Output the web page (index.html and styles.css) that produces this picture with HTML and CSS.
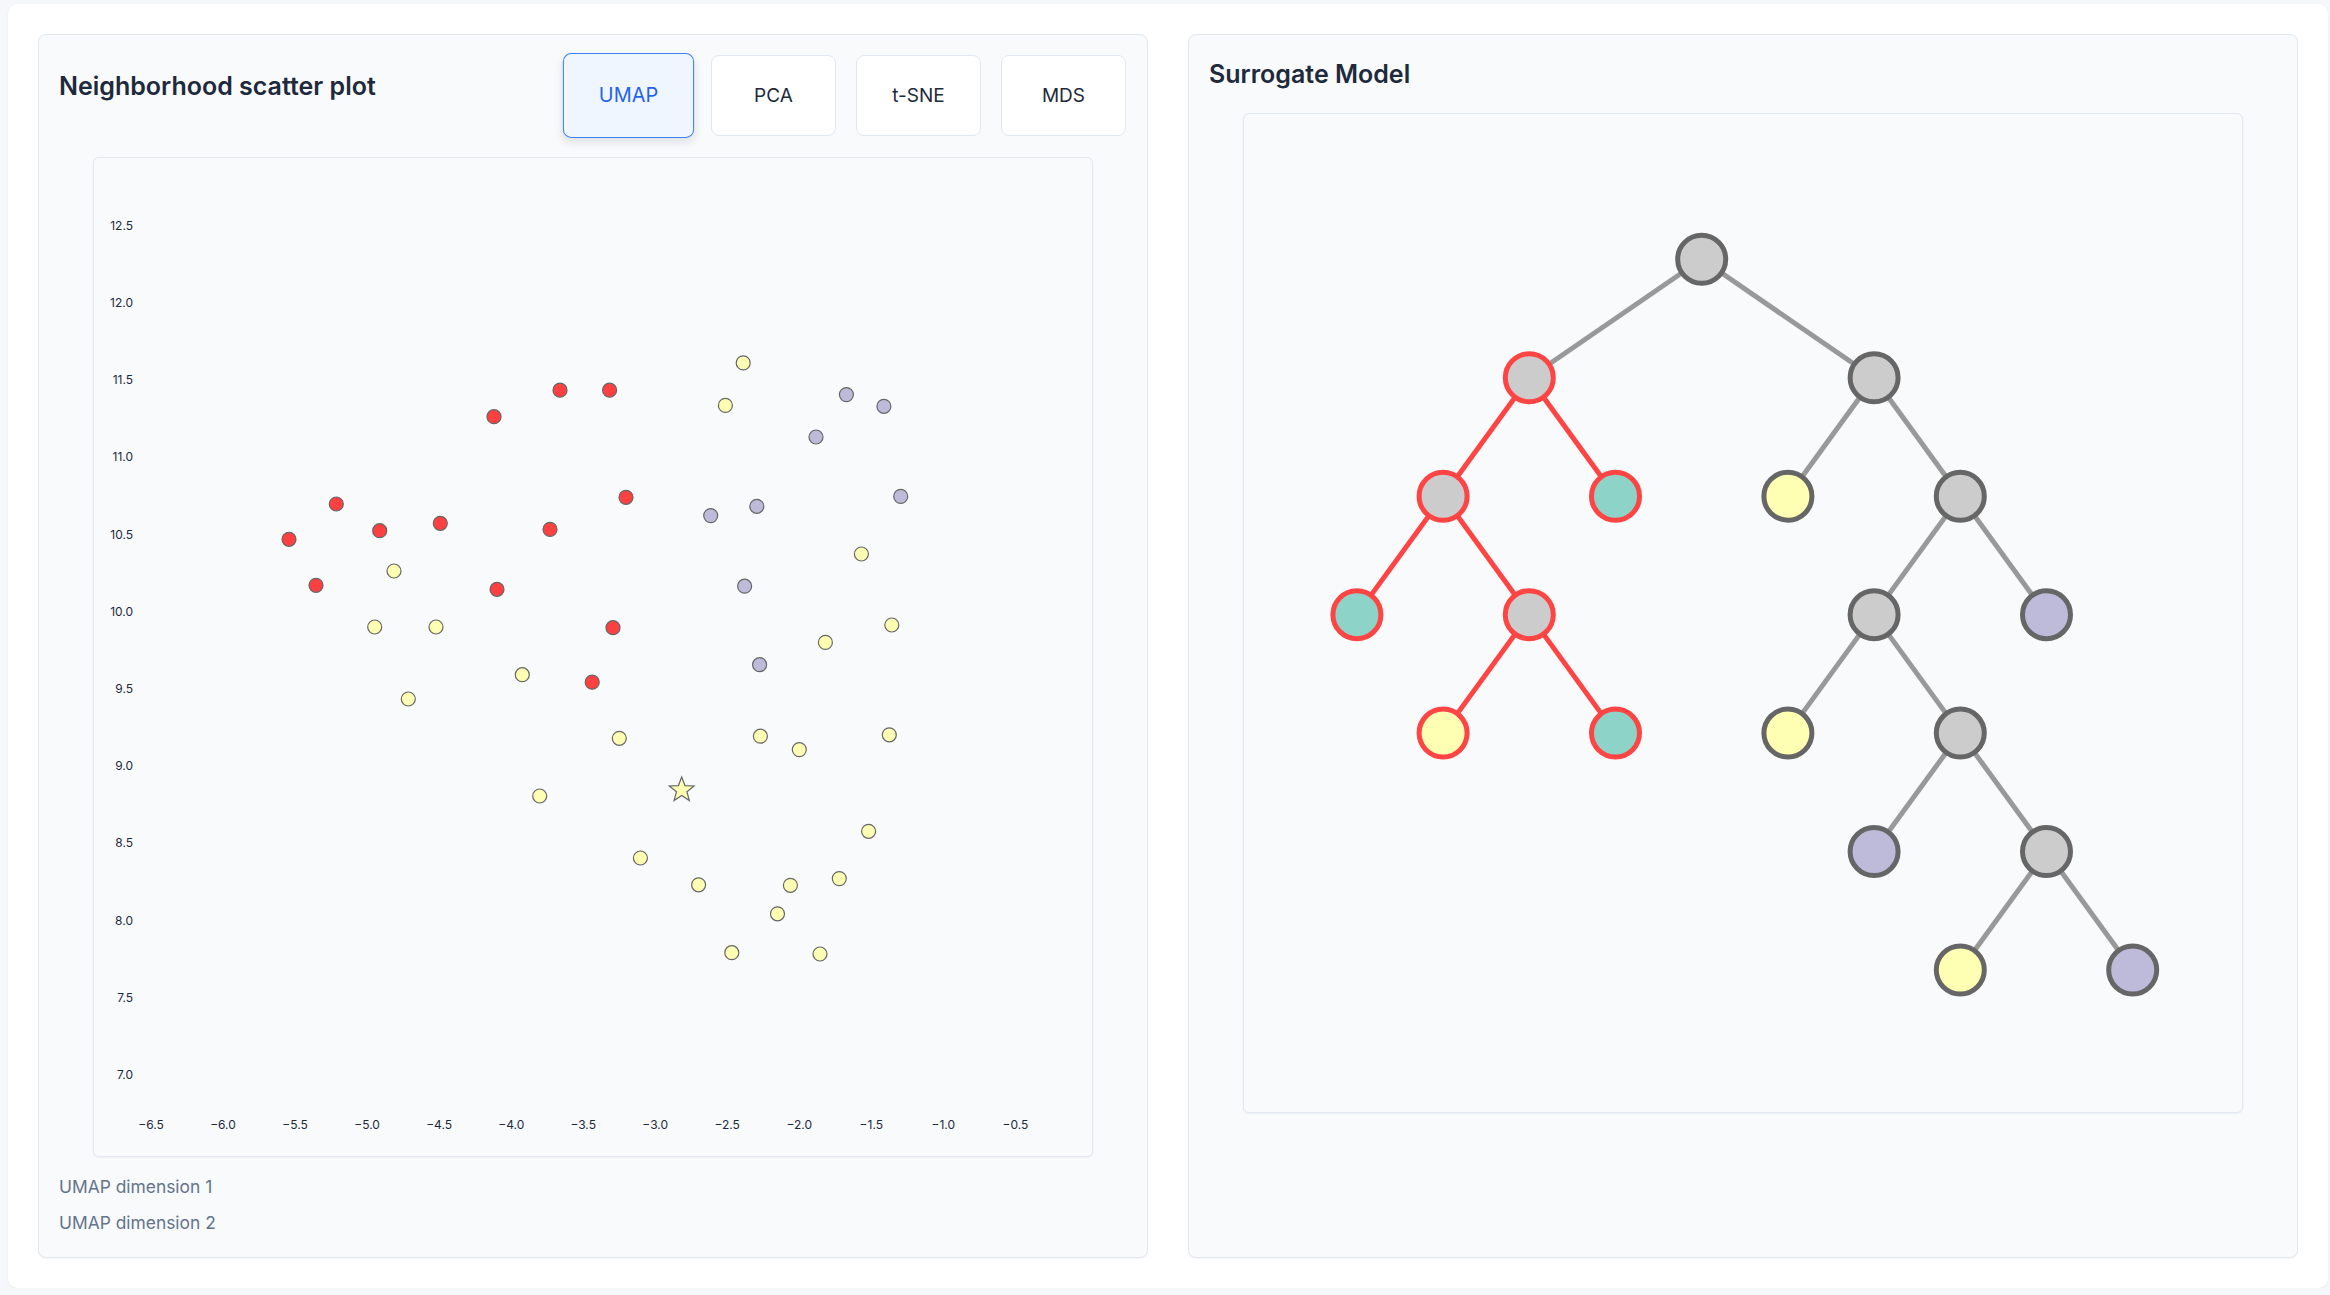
FILE: index.html
```html
<!DOCTYPE html>
<html lang="en">
<head>
<meta charset="utf-8">
<title>Neighborhood explorer</title>
<link rel="stylesheet" href="styles.css">
</head>
<body>
<div class="app">
  <section class="panel">
    <div class="panel-header">
      <h2 class="panel-title scatter-title">Neighborhood scatter plot</h2>
      <div class="method-tabs">
        <button class="tab active">UMAP</button>
        <button class="tab">PCA</button>
        <button class="tab">t-SNE</button>
        <button class="tab">MDS</button>
      </div>
    </div>
    <div class="chart-box">
      <svg class="chart" width="998" height="998" viewBox="0 0 998 998">
        <g transform="translate(-94,-158)">
          <g class="ticks-y">
            <text x="133" y="225.3">12.5</text>
            <text x="133" y="302.5">12.0</text>
            <text x="133" y="379.7">11.5</text>
            <text x="133" y="456.9">11.0</text>
            <text x="133" y="534.1">10.5</text>
            <text x="133" y="611.3">10.0</text>
            <text x="133" y="688.5">9.5</text>
            <text x="133" y="765.7">9.0</text>
            <text x="133" y="842.9">8.5</text>
            <text x="133" y="920.1">8.0</text>
            <text x="133" y="997.3">7.5</text>
            <text x="133" y="1074.5">7.0</text>
          </g>
          <g class="ticks-x">
            <text x="151" y="1124">−6.5</text>
            <text x="223" y="1124">−6.0</text>
            <text x="295.1" y="1124">−5.5</text>
            <text x="367.1" y="1124">−5.0</text>
            <text x="439.1" y="1124">−4.5</text>
            <text x="511.2" y="1124">−4.0</text>
            <text x="583.2" y="1124">−3.5</text>
            <text x="655.2" y="1124">−3.0</text>
            <text x="727.2" y="1124">−2.5</text>
            <text x="799.3" y="1124">−2.0</text>
            <text x="871.3" y="1124">−1.5</text>
            <text x="943.3" y="1124">−1.0</text>
            <text x="1015.4" y="1124">−0.5</text>
          </g>
          <g class="pt red">
            <circle cx="289" cy="539.3" r="7"/>
            <circle cx="336.3" cy="504" r="7"/>
            <circle cx="316" cy="585.3" r="7"/>
            <circle cx="379.7" cy="530.7" r="7"/>
            <circle cx="440.3" cy="523.3" r="7"/>
            <circle cx="494" cy="416.7" r="7"/>
            <circle cx="560" cy="390.2" r="7"/>
            <circle cx="609.6" cy="390.2" r="7"/>
            <circle cx="497" cy="589.3" r="7"/>
            <circle cx="550" cy="529.4" r="7"/>
            <circle cx="626" cy="497.3" r="7"/>
            <circle cx="613" cy="627.7" r="7"/>
            <circle cx="592.2" cy="682.2" r="7"/>
          </g>
          <g class="pt yellow">
            <circle cx="394" cy="571" r="7"/>
            <circle cx="374.7" cy="627" r="7"/>
            <circle cx="436" cy="627" r="7"/>
            <circle cx="408.3" cy="699" r="7"/>
            <circle cx="522.3" cy="674.7" r="7"/>
            <circle cx="539.7" cy="796" r="7"/>
            <circle cx="619.3" cy="738.3" r="7"/>
            <circle cx="640.4" cy="858" r="7"/>
            <circle cx="698.6" cy="884.8" r="7"/>
            <circle cx="731.8" cy="952.7" r="7"/>
            <circle cx="743.2" cy="362.9" r="7"/>
            <circle cx="725.4" cy="405.4" r="7"/>
            <circle cx="760.4" cy="736.2" r="7"/>
            <circle cx="799.3" cy="749.6" r="7"/>
            <circle cx="777.5" cy="913.8" r="7"/>
            <circle cx="790.4" cy="885.3" r="7"/>
            <circle cx="820" cy="954" r="7"/>
            <circle cx="839.3" cy="878.6" r="7"/>
            <circle cx="868.6" cy="831.3" r="7"/>
            <circle cx="889.3" cy="734.8" r="7"/>
            <circle cx="891.8" cy="625" r="7"/>
            <circle cx="861.4" cy="554" r="7"/>
            <circle cx="825.4" cy="642.4" r="7"/>
          </g>
          <g class="pt purple">
            <circle cx="846.4" cy="394.6" r="7"/>
            <circle cx="883.9" cy="406.3" r="7"/>
            <circle cx="816" cy="437" r="7"/>
            <circle cx="710.7" cy="515.6" r="7"/>
            <circle cx="756.8" cy="506.3" r="7"/>
            <circle cx="900.7" cy="496.4" r="7"/>
            <circle cx="744.6" cy="586.2" r="7"/>
            <circle cx="759.6" cy="664.7" r="7"/>
          </g>
          <polygon class="pt yellow star" transform="translate(681.7,790)" points="0,-13 3.23,-4.45 12.36,-4.02 5.23,1.7 7.64,10.52 0,5.5 -7.64,10.52 -5.23,1.7 -12.36,-4.02 -3.23,-4.45"/>
        </g>
      </svg>
    </div>
    <div class="axis-caption first">UMAP dimension 1</div>
    <div class="axis-caption">UMAP dimension 2</div>
  </section>

  <section class="panel">
    <h2 class="panel-title tree-title">Surrogate Model</h2>
    <div class="chart-box">
      <svg class="chart" width="998" height="998" viewBox="0 0 998 998">
        <g transform="translate(-1244,-114)">
          <g class="edge">
            <line x1="1701.7" y1="259.3" x2="1529.3" y2="377.75"/>
            <line x1="1701.7" y1="259.3" x2="1874.1" y2="377.75"/>
            <line x1="1874.1" y1="377.75" x2="1787.9" y2="496.2"/>
            <line x1="1874.1" y1="377.75" x2="1960.3" y2="496.2"/>
            <line x1="1960.3" y1="496.2" x2="1874.1" y2="614.65"/>
            <line x1="1960.3" y1="496.2" x2="2046.5" y2="614.65"/>
            <line x1="1874.1" y1="614.65" x2="1787.9" y2="733.1"/>
            <line x1="1874.1" y1="614.65" x2="1960.3" y2="733.1"/>
            <line x1="1960.3" y1="733.1" x2="1874.1" y2="851.55"/>
            <line x1="1960.3" y1="733.1" x2="2046.5" y2="851.55"/>
            <line x1="2046.5" y1="851.55" x2="1960.3" y2="970"/>
            <line x1="2046.5" y1="851.55" x2="2132.7" y2="970"/>
          </g>
          <g class="edge path">
            <line x1="1529.3" y1="377.75" x2="1443.1" y2="496.2"/>
            <line x1="1529.3" y1="377.75" x2="1615.5" y2="496.2"/>
            <line x1="1443.1" y1="496.2" x2="1356.9" y2="614.65"/>
            <line x1="1443.1" y1="496.2" x2="1529.3" y2="614.65"/>
            <line x1="1529.3" y1="614.65" x2="1443.1" y2="733.1"/>
            <line x1="1529.3" y1="614.65" x2="1615.5" y2="733.1"/>
          </g>
          <g class="node">
            <circle class="split" cx="1701.7" cy="259.3" r="24"/>
            <circle class="split on-path" cx="1529.3" cy="377.75" r="24"/>
            <circle class="split" cx="1874.1" cy="377.75" r="24"/>
            <circle class="split on-path" cx="1443.1" cy="496.2" r="24"/>
            <circle class="leaf-teal on-path" cx="1615.5" cy="496.2" r="24"/>
            <circle class="leaf-yellow" cx="1787.9" cy="496.2" r="24"/>
            <circle class="split" cx="1960.3" cy="496.2" r="24"/>
            <circle class="leaf-teal on-path" cx="1356.9" cy="614.65" r="24"/>
            <circle class="split on-path" cx="1529.3" cy="614.65" r="24"/>
            <circle class="split" cx="1874.1" cy="614.65" r="24"/>
            <circle class="leaf-purple" cx="2046.5" cy="614.65" r="24"/>
            <circle class="leaf-yellow on-path" cx="1443.1" cy="733.1" r="24"/>
            <circle class="leaf-teal on-path" cx="1615.5" cy="733.1" r="24"/>
            <circle class="leaf-yellow" cx="1787.9" cy="733.1" r="24"/>
            <circle class="split" cx="1960.3" cy="733.1" r="24"/>
            <circle class="leaf-purple" cx="1874.1" cy="851.55" r="24"/>
            <circle class="split" cx="2046.5" cy="851.55" r="24"/>
            <circle class="leaf-yellow" cx="1960.3" cy="970" r="24"/>
            <circle class="leaf-purple" cx="2132.7" cy="970" r="24"/>
          </g>
        </g>
      </svg>
    </div>
  </section>
</div>
</body>
</html>
```

FILE: styles.css
```css
* { box-sizing: border-box; }

html, body {
  margin: 0;
  padding: 0;
  background: #f5f7fa;
  font-family: Inter, "Noto Sans", sans-serif;
  color: #1e293b;
}

.app {
  margin: 4px 2px 0 8px;
  height: 1284px;
  padding: 30px;
  background: #ffffff;
  border-radius: 10px;
  box-shadow: 0 1px 3px rgba(15, 23, 42, 0.05);
  display: grid;
  grid-template-columns: 1fr 1fr;
  gap: 40px;
}

.panel {
  background: #f8fafc;
  border: 1px solid #e2e8f0;
  border-radius: 8px;
  padding: 20px;
  display: flex;
  flex-direction: column;
  box-shadow: 0 1px 2px rgba(15, 23, 42, 0.04);
}

.panel-header {
  display: flex;
  justify-content: space-between;
  align-items: flex-start;
  height: 81px;
}

.panel-title {
  margin: 0;
  font-size: 25px;
  line-height: 32px;
  font-weight: 600;
  color: #1e293b;
}

.scatter-title { margin-top: 15px; }
.tree-title { margin-top: 3px; }

.method-tabs {
  display: flex;
  gap: 20px;
  margin-right: 1px;
}

.tab {
  width: 125px;
  height: 81px;
  border: 1px solid #e2e8f0;
  border-radius: 8px;
  background: #ffffff;
  font-family: Inter, "Noto Sans", sans-serif;
  font-size: 19px;
  font-weight: 400;
  color: #1e293b;
  padding: 0;
}

.tab.active {
  background: #eff6ff;
  border-color: #3b82f6;
  color: #2563eb;
  transform: scale(1.05);
  box-shadow: 0 4px 8px rgba(15, 23, 42, 0.1);
}

.chart-box {
  width: 1000px;
  height: 1000px;
  align-self: center;
  margin-top: 21px;
  border: 1px solid #e2e8f0;
  border-radius: 6px;
  background: #f8fafc;
  box-shadow: 0 1px 2px rgba(15, 23, 42, 0.05);
  overflow: hidden;
}

.panel > .tree-title + .chart-box { margin-top: 23px; }

.chart { display: block; }

.ticks-y text,
.ticks-x text {
  font-family: Inter, "Noto Sans", sans-serif;
  font-size: 12px;
  fill: #1e293b;
  dominant-baseline: central;
}

.ticks-y text { text-anchor: end; }
.ticks-x text { text-anchor: middle; }

.pt { stroke: #666666; stroke-width: 1.2; }
.pt.red { fill: #ff4040; }
.pt.yellow { fill: #ffffb3; }
.pt.purple { fill: #bebada; }
.star { stroke-width: 1.2; }

.edge line { stroke: #999999; stroke-width: 5; }
.edge.path line { stroke: #ff4444; stroke-width: 5; }

.node circle { stroke: #666666; stroke-width: 5; }
.node .split { fill: #cccccc; }
.node .leaf-teal { fill: #8dd3c7; }
.node .leaf-yellow { fill: #ffffb3; }
.node .leaf-purple { fill: #bebada; }
.node .on-path { stroke: #ff4444; }

.axis-caption {
  font-size: 17.4px;
  line-height: 24px;
  color: #64748b;
  margin-top: 12px;
}

.axis-caption.first { margin-top: 18px; }
```
